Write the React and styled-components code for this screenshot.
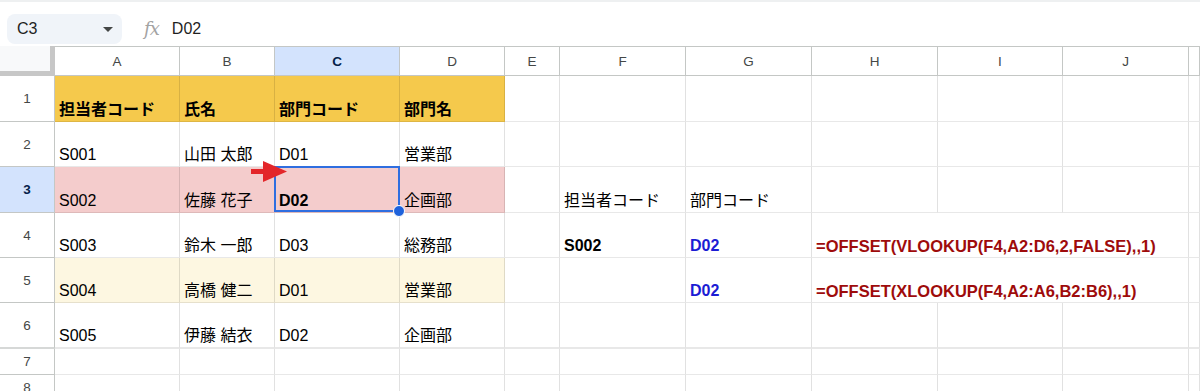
import React from "react";
import styled, { createGlobalStyle, css } from "styled-components";

const Global = createGlobalStyle`
  html, body { margin: 0; padding: 0; background: #fff; }
  body { font-family: "Liberation Sans", Arial, "Noto Sans CJK JP", sans-serif; overflow: hidden; }
`;

const Page = styled.div`
  width: 1200px;
  height: 391px;
  overflow: hidden;
  background: #fff;
`;

const FormulaBar = styled.div`
  height: 46px;
  box-sizing: border-box;
  border-top: 2px solid #eef0f1;
  display: flex;
  align-items: center;
  padding: 10px 0 0 7px;
`;

const NameBox = styled.div`
  width: 115px;
  height: 30px;
  box-sizing: border-box;
  background: #f0f4f9;
  border-radius: 8px;
  display: flex;
  align-items: center;
  justify-content: space-between;
  padding: 0 9px 0 10px;
  font-size: 16px;
  color: #1f1f1f;
`;

const Caret = styled.span`
  width: 0;
  height: 0;
  border-left: 5px solid transparent;
  border-right: 5px solid transparent;
  border-top: 5px solid #444746;
`;

const Fx = styled.span`
  margin-left: 22px;
  font-family: "DejaVu Serif", "Liberation Serif", serif;
  font-style: italic;
  font-size: 18px;
  color: #a3a3a3;
  letter-spacing: -1px;
  line-height: 1;
`;

const FormulaText = styled.span`
  margin-left: 13px;
  font-size: 16px;
  color: #1f1f1f;
`;

const Sheet = styled.div`
  position: relative;
  display: grid;
  grid-template-columns: 55px 125px 95px 125px 105px 55px 126px 126px 126px 125px 126px 1fr;
  grid-template-rows: 30px 46px 45px 46px 45px 45px 46px 26px 26px;
`;

const Corner = styled.div`
  background: #f8f9fa;
  border-right: 5px solid #c7c7c7;
  border-bottom: 5px solid #c7c7c7;
`;

const ColHead = styled.div`
  box-sizing: border-box;
  border-right: 1px solid #c4c7c5;
  border-bottom: 1px solid #c4c7c5;
  border-top: 1px solid #c4c7c5;
  display: flex;
  align-items: center;
  justify-content: center;
  font-size: 13.5px;
  color: #444746;
  background: ${(p) => (p.$active ? "#d3e3fd" : "#fff")};
  ${(p) =>
    p.$active &&
    css`
      font-weight: bold;
      color: #041e49;
    `}
`;

const RowHead = styled.div`
  box-sizing: border-box;
  border-right: 1px solid #c4c7c5;
  border-bottom: ${(p) => (p.$thick ? "2px solid #d6d8d7" : "1px solid #c4c7c5")};
  display: flex;
  align-items: center;
  justify-content: center;
  font-size: 13.5px;
  color: #444746;
  background: ${(p) => (p.$active ? "#d3e3fd" : "#fff")};
  ${(p) =>
    p.$active &&
    css`
      font-weight: bold;
      color: #041e49;
    `}
`;

const Cell = styled.div`
  position: relative;
  box-sizing: border-box;
  border-right: 1px solid rgba(0, 0, 0, 0.115);
  border-bottom: ${(p) => (p.$thick ? 2 : 1)}px solid rgba(0, 0, 0, 0.09);
  background: ${(p) => p.$fill || "#fff"};
  display: flex;
  align-items: flex-end;
  padding: 0 0 2px 4px;
  font-size: ${(p) => (p.$span ? 16.5 : 16)}px;
  line-height: 18px;
  white-space: nowrap;
  color: ${(p) => p.$color || "#000"};
  font-weight: ${(p) => (p.$bold ? "bold" : "normal")};
  grid-column: span ${(p) => p.$span || 1};
`;

const Selection = styled.div`
  position: absolute;
  z-index: 4;
  left: -1px;
  top: -1px;
  right: -1px;
  bottom: 0;
  border: 2px solid #2f6ee0;
  pointer-events: none;
`;

const Handle = styled.div`
  position: absolute;
  right: -7px;
  bottom: -7px;
  width: 12px;
  height: 12px;
  border-radius: 50%;
  background: #1f62db;
  border: 1px solid #fff;
  box-sizing: border-box;
`;

const Arrow = styled.svg`
  position: absolute;
  z-index: 5;
  left: 250px;
  top: 114px;
  width: 40px;
  height: 26px;
`;

const YELLOW = "#f5c94c";
const PINK = "#f4cccc";
const CREAM = "#fdf7e1";
const BLUE = "#1c1cd4";
const RED = "#9e0b0b";

const cols = ["A", "B", "C", "D", "E", "F", "G", "H", "I", "J", ""];

const c = (text, opts = {}) => ({ text, ...opts });

const rows = [
  {
    n: 1,
    cells: [
      c("担当者コード", { bold: true, fill: YELLOW }),
      c("氏名", { bold: true, fill: YELLOW }),
      c("部門コード", { bold: true, fill: YELLOW }),
      c("部門名", { bold: true, fill: YELLOW }),
      c(""), c(""), c(""), c(""), c(""), c(""), c(""),
    ],
  },
  {
    n: 2,
    cells: [
      c("S001"), c("山田 太郎"), c("D01"), c("営業部"),
      c(""), c(""), c(""), c(""), c(""), c(""), c(""),
    ],
  },
  {
    n: 3,
    active: true,
    cells: [
      c("S002", { fill: PINK }),
      c("佐藤 花子", { fill: PINK }),
      c("D02", { fill: PINK, bold: true, selected: true }),
      c("企画部", { fill: PINK }),
      c(""), c("担当者コード"), c("部門コード"), c(""), c(""), c(""), c(""),
    ],
  },
  {
    n: 4,
    cells: [
      c("S003"), c("鈴木 一郎"), c("D03"), c("総務部"),
      c(""), c("S002", { bold: true }), c("D02", { bold: true, color: BLUE }),
      c("=OFFSET(VLOOKUP(F4,A2:D6,2,FALSE),,1)", { bold: true, color: RED, span: 3 }),
      c(""),
    ],
  },
  {
    n: 5,
    cells: [
      c("S004", { fill: CREAM }),
      c("高橋 健二", { fill: CREAM }),
      c("D01", { fill: CREAM }),
      c("営業部", { fill: CREAM }),
      c(""), c(""), c("D02", { bold: true, color: BLUE }),
      c("=OFFSET(XLOOKUP(F4,A2:A6,B2:B6),,1)", { bold: true, color: RED, span: 3 }),
      c(""),
    ],
  },
  {
    n: 6,
    thick: true,
    cells: [
      c("S005"), c("伊藤 結衣"), c("D02"), c("企画部"),
      c(""), c(""), c(""), c(""), c(""), c(""), c(""),
    ],
  },
  { n: 7, cells: Array.from({ length: 11 }, () => c("")) },
  { n: 8, cells: Array.from({ length: 11 }, () => c("")) },
];

export default function App() {
  return (
    <Page>
      <Global />
      <FormulaBar>
        <NameBox>
          <span>C3</span>
          <Caret />
        </NameBox>
        <Fx>fx</Fx>
        <FormulaText>D02</FormulaText>
      </FormulaBar>
      <Sheet>
        <Corner />
        {cols.map((l, i) => (
          <ColHead key={i} $active={l === "C"}>
            {l}
          </ColHead>
        ))}
        {rows.map((r) => (
          <React.Fragment key={r.n}>
            <RowHead $active={r.active} $thick={r.thick}>
              {r.n}
            </RowHead>
            {r.cells.map((cell, i) => (
              <Cell
                key={i}
                $fill={cell.fill}
                $bold={cell.bold}
                $color={cell.color}
                $span={cell.span}
                $thick={r.thick}
              >
                {cell.text}
                {cell.selected && (
                  <Selection>
                    <Handle />
                  </Selection>
                )}
              </Cell>
            ))}
          </React.Fragment>
        ))}
        <Arrow viewBox="0 0 40 26">
          <rect x="1" y="9" width="14" height="5" fill="#e3262a" />
          <polygon points="13,1 37,11.5 13,22" fill="#e3262a" />
        </Arrow>
      </Sheet>
    </Page>
  );
}
